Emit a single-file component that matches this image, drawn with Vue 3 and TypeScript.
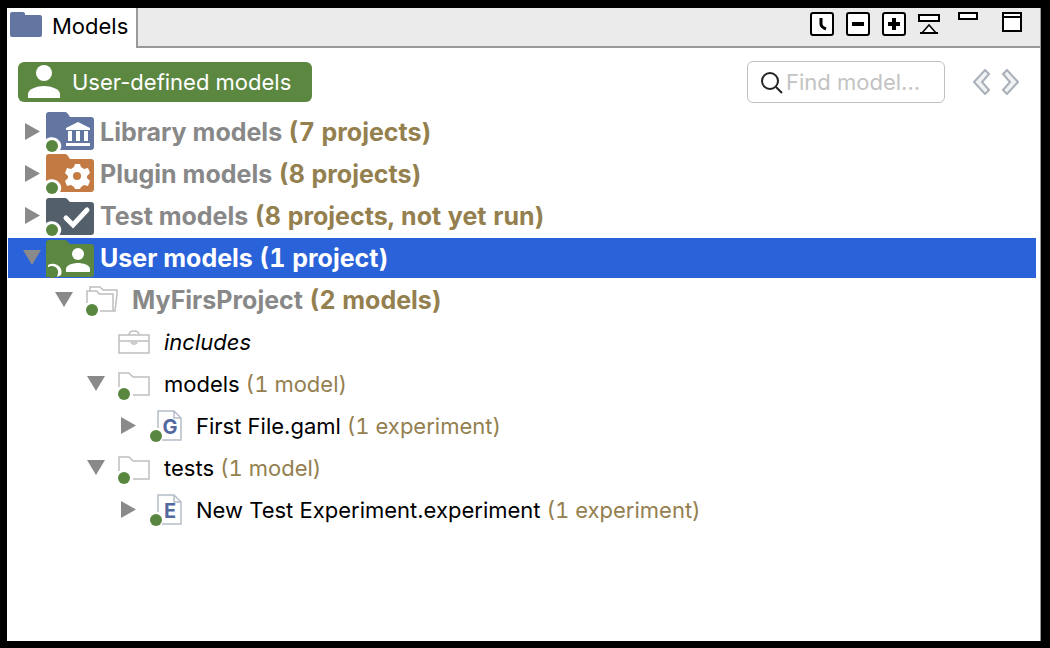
<script setup lang="ts">
import { computed, ref } from 'vue'

type Icon = 'library' | 'plugin' | 'test' | 'user' | 'project' | 'includes' | 'folder' | 'file'

interface Node {
  id: string
  depth: number
  icon: Icon
  label: string
  count?: string
  letter?: string
  parents: string[]
  expandable: boolean
}

const nodes: Node[] = [
  { id: 'library', depth: 0, icon: 'library', label: 'Library models', count: '(7 projects)', parents: [], expandable: true },
  { id: 'plugin', depth: 0, icon: 'plugin', label: 'Plugin models', count: '(8 projects)', parents: [], expandable: true },
  { id: 'test', depth: 0, icon: 'test', label: 'Test models', count: '(8 projects, not yet run)', parents: [], expandable: true },
  { id: 'user', depth: 0, icon: 'user', label: 'User models', count: '(1 project)', parents: [], expandable: true },
  { id: 'project', depth: 1, icon: 'project', label: 'MyFirsProject', count: '(2 models)', parents: ['user'], expandable: true },
  { id: 'includes', depth: 2, icon: 'includes', label: 'includes', parents: ['user', 'project'], expandable: false },
  { id: 'models', depth: 2, icon: 'folder', label: 'models', count: '(1 model)', parents: ['user', 'project'], expandable: true },
  { id: 'gaml', depth: 3, icon: 'file', letter: 'G', label: 'First File.gaml', count: '(1 experiment)', parents: ['user', 'project', 'models'], expandable: true },
  { id: 'tests', depth: 2, icon: 'folder', label: 'tests', count: '(1 model)', parents: ['user', 'project'], expandable: true },
  { id: 'experiment', depth: 3, icon: 'file', letter: 'E', label: 'New Test Experiment.experiment', count: '(1 experiment)', parents: ['user', 'project', 'tests'], expandable: true },
]

const folderColors: Partial<Record<Icon, string>> = {
  library: '#6276a1',
  plugin: '#c47a43',
  test: '#535f6b',
  user: '#5c8741',
}

const open = ref<string[]>(['user', 'project', 'models', 'tests'])
const selected = ref('user')
const query = ref('')

const rows = computed(() => nodes.filter((n) => n.parents.every((p) => open.value.includes(p))))

function toggle(id: string) {
  open.value = open.value.includes(id) ? open.value.filter((o) => o !== id) : [...open.value, id]
}
</script>

<template>
  <div class="frame">
    <main class="panel">
      <header class="tabbar">
        <div class="tab">
          <svg class="tab-icon" viewBox="0 0 34 28" aria-hidden="true">
            <path d="M1 4q0-2 2-2h11q2 0 2 2v1h15q2 0 2 2v18q0 2-2 2H3q-2 0-2-2z" fill="#6276a1" />
          </svg>
          <h1>Models</h1>
        </div>
        <div class="tools">
          <button type="button" class="tool" aria-label="Link with history">
            <svg viewBox="0 0 24 24"><rect x="1" y="1" width="22" height="22" rx="2" fill="#fff" stroke="#000" stroke-width="2" /><path d="M11 6v6q0 3 5 5" fill="none" stroke="#000" stroke-width="3" /></svg>
          </button>
          <button type="button" class="tool" aria-label="Collapse all">
            <svg viewBox="0 0 24 24"><rect x="1" y="1" width="22" height="22" rx="2" fill="#fff" stroke="#000" stroke-width="2" /><path d="M6 12h12" stroke="#000" stroke-width="4" /></svg>
          </button>
          <button type="button" class="tool" aria-label="Expand all">
            <svg viewBox="0 0 24 24"><rect x="1" y="1" width="22" height="22" rx="2" fill="#fff" stroke="#000" stroke-width="2" /><path d="M6 12h12M12 6v12" stroke="#000" stroke-width="4" /></svg>
          </button>
          <button type="button" class="tool" aria-label="View menu">
            <svg viewBox="0 0 24 24"><path d="M1 3h20v6H1z" fill="#fff" stroke="#000" stroke-width="2" /><path d="M4 21l7-8 7 8z" fill="#fff" stroke="#000" stroke-width="1.5" /><path d="M2 21h18" stroke="#000" stroke-width="2" /></svg>
          </button>
          <button type="button" class="tool window" aria-label="Minimize">
            <svg viewBox="0 0 24 24"><path d="M3 1h18v6H3z" fill="#fff" stroke="#000" stroke-width="2" /></svg>
          </button>
          <button type="button" class="tool window last" aria-label="Maximize">
            <svg viewBox="0 0 24 24"><path d="M3 1h18v18H3zM3 5h18" fill="#fff" stroke="#000" stroke-width="2" /></svg>
          </button>
        </div>
      </header>

      <div class="toolbar">
        <button type="button" class="pill">
          <svg class="pill-icon" viewBox="0 0 34 34" aria-hidden="true">
            <circle cx="17" cy="8" r="8" fill="#fff" />
            <path d="M1 33v-4c0-5 9-8 16-8s16 3 16 8v4z" fill="#fff" />
          </svg>
          <span>User-defined models</span>
        </button>
        <label class="search">
          <svg viewBox="0 0 24 24" aria-hidden="true"><circle cx="10" cy="11" r="8" fill="none" stroke="#222" stroke-width="2" /><path d="M16 17l6 6" stroke="#222" stroke-width="2" /></svg>
          <input v-model="query" type="text" placeholder="Find model..." aria-label="Find model" />
        </label>
        <div class="nav">
          <button type="button" aria-label="Previous">
            <svg viewBox="0 0 18 26"><path d="M13 1l4 4-7 8 7 8-4 4L2 13z" fill="#f0f2f3" stroke="#a9b0b8" stroke-width="2" /></svg>
          </button>
          <button type="button" aria-label="Next">
            <svg viewBox="0 0 18 26"><path d="M6 1L2 5l7 8-7 8 4 4 11-12z" fill="#f0f2f3" stroke="#a9b0b8" stroke-width="2" /></svg>
          </button>
        </div>
      </div>

      <ul class="tree" role="tree" aria-label="Models">
        <li
          v-for="node in rows"
          :key="node.id"
          role="treeitem"
          class="row"
          :class="['depth-' + node.depth, { selected: selected === node.id }]"
          :aria-level="node.depth + 1"
          :aria-selected="selected === node.id"
          :aria-expanded="node.expandable ? open.includes(node.id) : undefined"
          @click="selected = node.id"
        >
          <button v-if="node.expandable" type="button" class="toggle" :aria-label="'Toggle ' + node.label" @click.stop="toggle(node.id)">
            <svg viewBox="0 0 18 18">
              <path v-if="open.includes(node.id)" d="M0 1h18L9 16z" fill="#8a8a8a" />
              <path v-else d="M2 0v17l15-8.5z" fill="#8a8a8a" />
            </svg>
          </button>
          <span v-else class="toggle"></span>

          <svg v-if="node.depth === 0" class="icon-large" viewBox="0 0 48 40" aria-hidden="true">
            <path
              v-if="node.icon === 'library' || node.icon === 'plugin'"
              d="M0 3q0-3 3-3h16q2 0 3 2l2 3h21q3 0 3 3v27q0 3-3 3H0z"
              :fill="folderColors[node.icon]"
            />
            <path v-else d="M0 5q0-3 3-3h16q2 0 3 2l2 2h21q3 0 3 3v27q0 3-3 3H0z" :fill="folderColors[node.icon]" />
            <path v-if="node.icon === 'user'" d="M2 27c7-4 16 2 13 10l-4 2c3-8-2-12-9-10z" fill="#fff" />
            <path v-else d="M0 40V27c7-5 17 1 15 9l-2 4z" fill="#fff" />
            <circle cx="6" cy="34" r="6" fill="#5a873f" />
            <g v-if="node.icon === 'library'" fill="#fff">
              <path d="M32 10l12 6v2H20v-2z" />
              <path d="M22 19h4v10h-4zM30 19h4v10h-4zM38 19h4v10h-4zM20 31h24v3H20z" />
            </g>
            <g v-else-if="node.icon === 'plugin'">
              <path d="M28 13l1-3h5l1 3 3 2 4-1 2 5-3 3v2l3 3-2 5-4-1-3 2-1 2h-5l-1-2-3-2-4 1-2-5 3-3v-2l-3-3 2-5 4 1z" fill="#fff" />
              <circle cx="31" cy="22" r="4" fill="#c47a43" />
            </g>
            <path v-else-if="node.icon === 'test'" d="M20 22l7 7 14-15" fill="none" stroke="#fff" stroke-width="5" stroke-linecap="round" />
            <g v-else fill="#fff">
              <circle cx="32" cy="16" r="6" />
              <path d="M20 34v-3c0-4 7-6 12-6s12 2 12 6v3z" />
            </g>
          </svg>

          <svg v-else class="icon-small" viewBox="0 0 36 32" aria-hidden="true">
            <g v-if="node.icon === 'project'" fill="none" stroke="#bfbfbf" stroke-width="1.5">
              <path d="M5 19V7h10l2 3h14v17H18" />
              <path d="M8 7V3h10l3 3h14v4l-2 17h-2" />
            </g>
            <g v-else-if="node.icon === 'includes'" fill="none" stroke="#bfbfbf" stroke-width="1.5">
              <path d="M5 9h30v18H5zM5 15h30" />
              <path d="M15 9q0-4 5-4t5 4" />
              <path d="M16 15h8v1q-1 3-4 3t-4-3z" fill="#ccc" stroke="none" />
            </g>
            <path v-else-if="node.icon === 'folder'" d="M5 19V5h10l4 4h16v18H19" fill="none" stroke="#bfbfbf" stroke-width="1.5" />
            <g v-else>
              <path d="M12 18V1h16l7 7v22H16M28 1v7h7" fill="none" stroke="#b5bdc8" stroke-width="1.5" />
              <text x="24" y="24" class="letter" text-anchor="middle">{{ node.letter }}</text>
            </g>
            <circle v-if="node.icon !== 'includes'" cx="10" cy="26" r="6" fill="#5a873f" />
          </svg>

          <span class="label" :class="{ strong: node.depth < 2, italic: node.icon === 'includes' }">
            <span class="name">{{ node.label }}</span>
            <span v-if="node.count" class="count">{{ ' ' + node.count }}</span>
          </span>
        </li>
      </ul>
    </main>
  </div>
</template>

<style>
body {
  background: #000;
}
</style>

<style scoped>
.frame {
  box-sizing: border-box;
  display: flex;
  min-height: 100vh;
  padding: 8px 9px 7px 7px;
  background: #000;
  color: #000;
  font-family: Inter, "Liberation Sans", sans-serif;
  font-size: 22px;
}

.panel {
  flex: 1;
  min-width: 0;
  background: #fff;
  border-right: 1px solid #999;
}

button {
  padding: 0;
  border: 0;
  background: none;
  color: inherit;
  font: inherit;
}

svg {
  display: block;
}

.tabbar {
  display: flex;
  height: 40px;
}

.tab {
  display: flex;
  align-items: flex-start;
  gap: 9px;
  padding: 2px 8px 0 2px;
}

.tab-icon {
  width: 34px;
  height: 28px;
}

h1 {
  margin: 0;
  font-size: 22px;
  font-weight: 400;
  line-height: 32px;
}

.tools {
  flex: 1;
  display: flex;
  justify-content: flex-end;
  gap: 12px;
  padding: 4px 16px 0 0;
  border-left: 2px solid #999;
  border-bottom: 2px solid #999;
  background: #ebebeb;
}

.tool {
  width: 24px;
  height: 24px;
}

.window {
  margin-left: 2px;
}

.last {
  margin-left: 8px;
}

.tool svg {
  width: 24px;
  height: 24px;
}

.toolbar {
  display: flex;
  align-items: center;
  padding: 13px 21px 9px 11px;
}

.pill {
  display: flex;
  align-items: center;
  gap: 11px;
  height: 40px;
  padding: 0 21px 0 9px;
  border-radius: 6px;
  background: #5c8741;
  color: #fff;
}

.pill-icon {
  width: 34px;
  height: 34px;
}

.search {
  box-sizing: border-box;
  display: flex;
  align-items: center;
  gap: 2px;
  width: 198px;
  height: 42px;
  margin-left: auto;
  padding: 0 8px 0 12px;
  border: 1px solid #bfbfbf;
  border-radius: 6px;
}

.search svg {
  flex: none;
  width: 24px;
  height: 24px;
}

.search input {
  flex: 1;
  min-width: 0;
  padding: 0;
  border: 0;
  outline: 0;
  background: none;
  font: inherit;
}

.search input::placeholder {
  color: #c3c3c3;
  opacity: 1;
}

.nav {
  display: flex;
  gap: 11px;
  margin-left: 27px;
}

.nav svg {
  width: 18px;
  height: 26px;
}

.tree {
  display: flex;
  flex-direction: column;
  gap: 2px;
  margin: 0;
  padding: 0 4px 0 1px;
  list-style: none;
}

.row {
  display: flex;
  align-items: center;
  height: 40px;
  padding-left: 15px;
}

.depth-1 {
  padding-left: 47px;
}

.depth-2 {
  padding-left: 79px;
}

.depth-3 {
  padding-left: 111px;
}

.toggle {
  flex: none;
  width: 18px;
  height: 18px;
}

.toggle svg {
  width: 18px;
  height: 18px;
}

.icon-large {
  flex: none;
  width: 48px;
  height: 40px;
  margin: 0 6px 0 5px;
}

.icon-small {
  flex: none;
  width: 36px;
  height: 32px;
  margin: 0 14px 0 9px;
}

.letter {
  fill: #5469a0;
  font-size: 20px;
  font-weight: 700;
}

.label {
  white-space: pre;
}

.count {
  color: #94804f;
  font-variant-numeric: tabular-nums;
}

.strong {
  color: #888;
  font-size: 25px;
  font-weight: 700;
  line-height: 40px;
}

.italic {
  font-style: italic;
}

.selected {
  background: #2962d9;
}

.selected .label,
.selected .count {
  color: #fff;
}
</style>
